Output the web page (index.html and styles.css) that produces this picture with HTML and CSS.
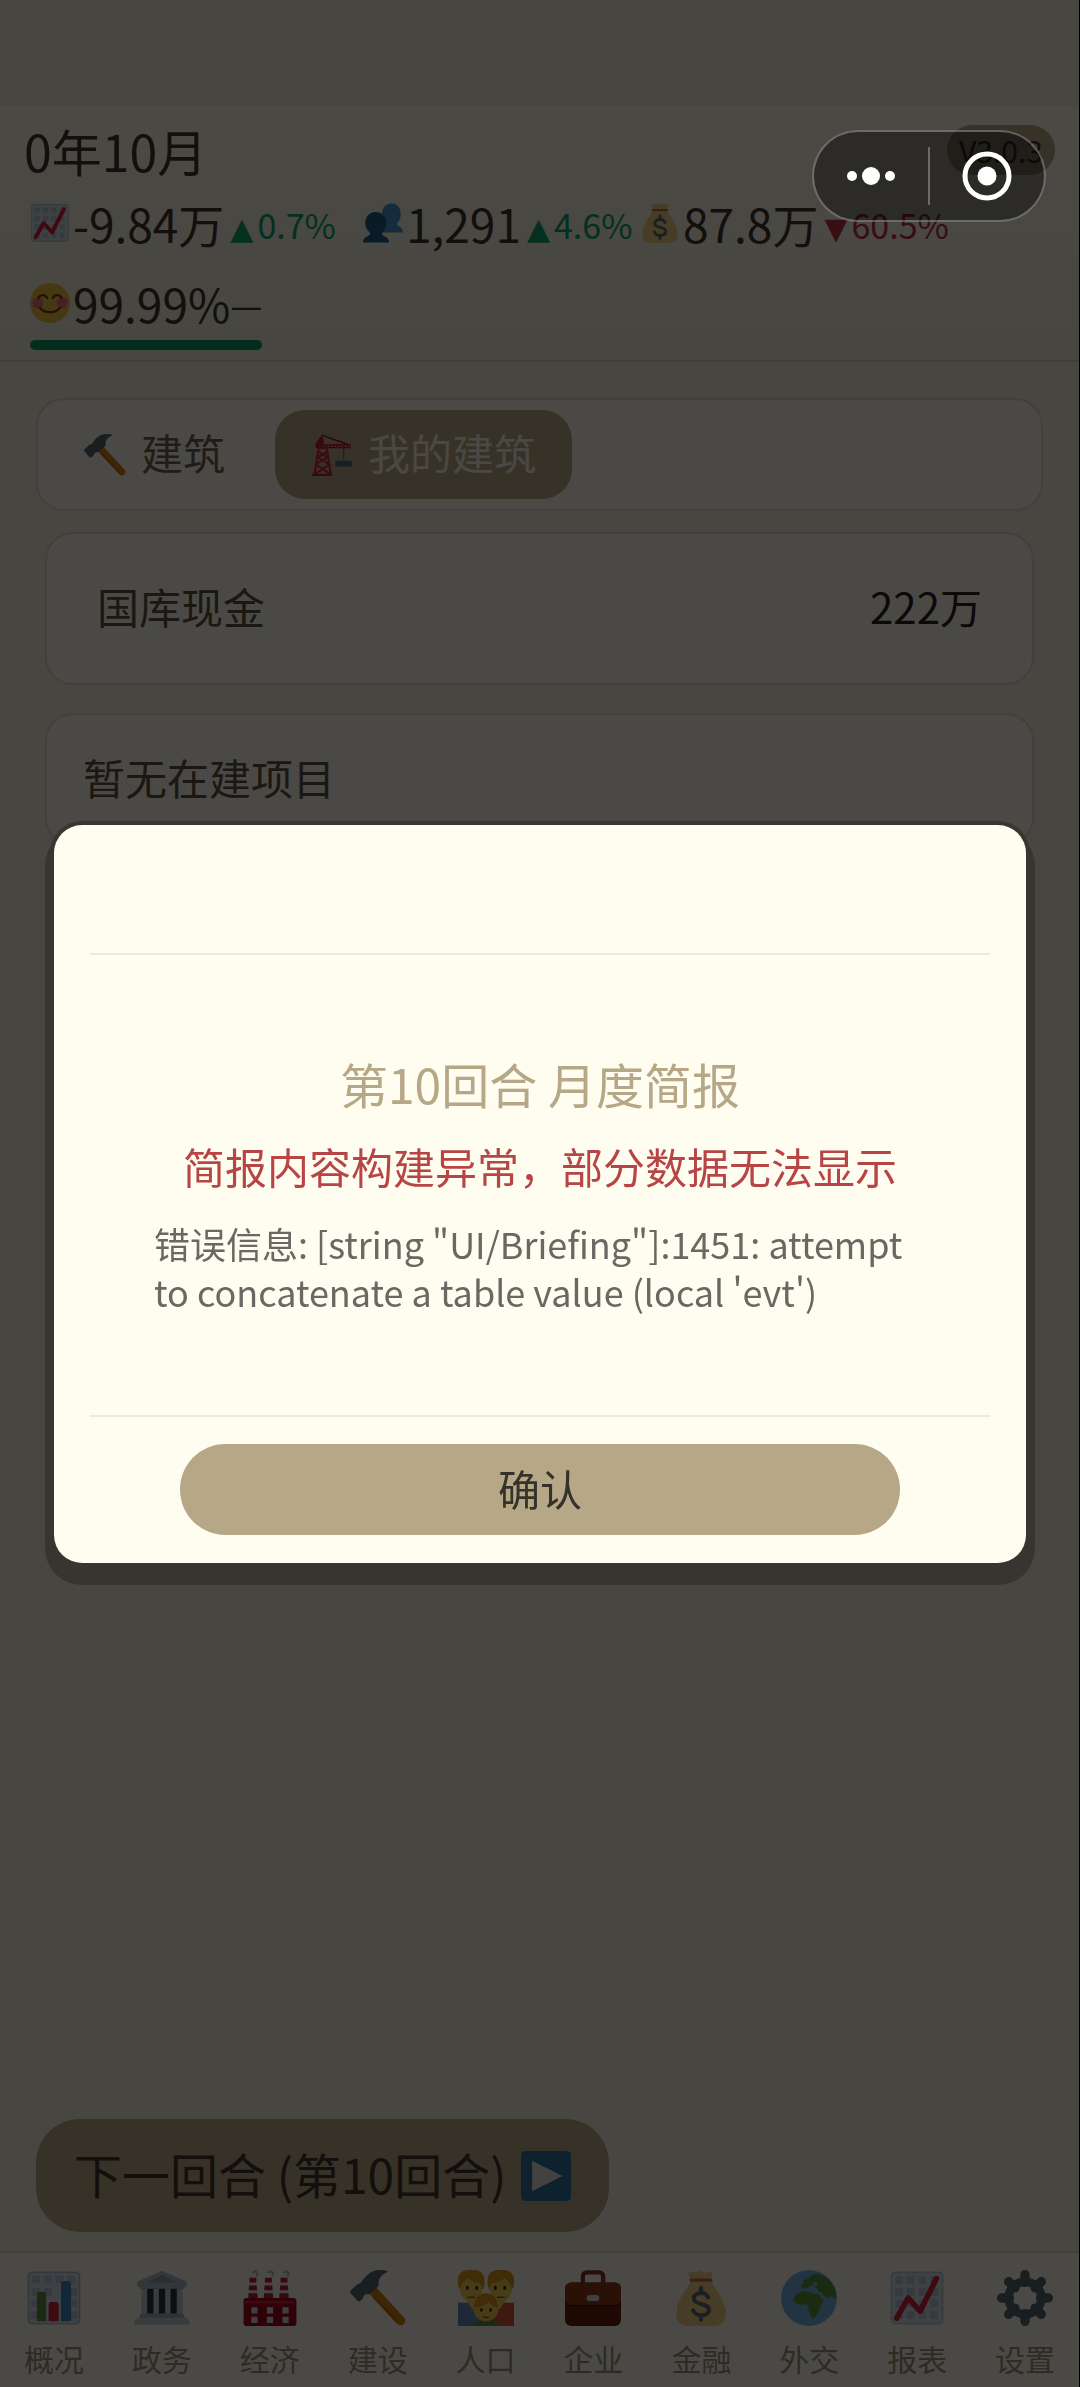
FILE: index.html
```html
<!DOCTYPE html>
<html lang="zh-CN">
<head>
<meta charset="utf-8">
<meta name="viewport" content="width=device-width, initial-scale=1">
<title>我的建筑</title>
<link rel="stylesheet" href="styles.css">
</head>
<body>
<svg class="sprite" aria-hidden="true">
  <symbol id="chart" viewBox="0 0 36 36">
    <rect x="1" y="1" width="34" height="34" rx="3" fill="#b4c2cc"/>
    <rect x="2" y="2" width="32" height="32" rx="2" fill="#d3dde4"/>
    <path fill="#b4c4d0" d="M4 4h5v5H4zM11.500 4h5v5h-5zM19 4h5v5h-5zM26.500 4h5v5h-5zM4 11.500h5v5H4zM11.500 11.500h5v5h-5zM19 11.500h5v5h-5zM26.500 11.500h5v5h-5zM4 19h5v5H4zM11.500 19h5v5h-5zM19 19h5v5h-5zM26.500 19h5v5h-5zM4 26.500h5v5H4zM11.500 26.500h5v5h-5zM19 26.500h5v5h-5zM26.500 26.500h5v5h-5z"/>
    <path d="M5 31l7.300-13L20 26.500 30.500 5.500" fill="none" stroke="#d1213a" stroke-width="3.600" stroke-linecap="round" stroke-linejoin="round"/>
  </symbol>
  <symbol id="bars" viewBox="0 0 36 36">
    <rect x="1" y="1" width="34" height="34" rx="3" fill="#aab8c2"/>
    <rect x="2" y="2" width="32" height="32" rx="2" fill="#d3dde4"/>
    <path fill="#b4c4d0" d="M4 3.500h5v5H4zM11.500 3.500h5v5h-5zM19 3.500h5v5h-5zM26.500 3.500h5v5h-5zM4 11.500h5v5H4zM11.500 11.500h5v5h-5zM29 11.500h4v5h-4zM29 19h4v5h-4zM29 26.500h4v5h-4zM3 19h4v5H3zM3 26.500h4v5H3z"/>
    <path fill="#5c913b" d="M7 33V16a2 2 0 0 1 2-2h2a2 2 0 0 1 2 2v17z"/>
    <path fill="#d1213a" d="M14.500 33V22.500a2 2 0 0 1 2-2h2.500a2 2 0 0 1 2 2V33z"/>
    <path fill="#3b88c3" d="M22.500 33V9a2 2 0 0 1 2-2H27a2 2 0 0 1 2 2v24z"/>
  </symbol>
  <symbol id="bank" viewBox="0 0 36 36">
    <path fill="#66757f" d="M5 11h26v18H5z"/>
    <path fill="#292f33" d="M8 12h20v16H8z"/>
    <path fill="#bcc8d1" d="M5 12h3.500v17H5zM12.500 12H16v17h-3.500zM20 12h3.500v17H20zM27.500 12H31v17h-3.500z"/>
    <path fill="#aab8c2" d="M18 .5L34 7.500V10l-2 2H4l-2-2V7.500z"/>
    <path fill="#8899a6" d="M18 3l10 5H8z"/>
    <path fill="#9aaab4" d="M4.500 28h27l1.500 3H3z"/>
    <path fill="#bcc8d1" d="M3 31h30c1.500 0 3 1.500 3 4H0c0-2.500 1.500-4 3-4z"/>
  </symbol>
  <symbol id="factory" viewBox="0 0 36 36">
    <path fill="#dce4e9" d="M5 6h4l1 13H4zM15 6h4l1 13h-6zM25 6h4l1 13h-6z"/>
    <path fill="#be1931" d="M4.800 5h4.400v3H4.700zM4.500 10h5l.2 3H4.300zM4.200 15h5.600l.2 3H4zM14.800 5h4.400v3h-4.500zM14.500 10h5l.2 3h-5.400zM14.200 15h5.600l.2 3h-6zM24.800 5h4.400v3h-4.500zM24.500 10h5l.2 3h-5.400zM24.200 15h5.600l.2 3h-6z"/>
    <rect x="1" y="18" width="34" height="18" rx="2" fill="#a0041e"/>
    <path fill="#c9263d" d="M2 20h32v1.500H2z"/>
    <path fill="#ccd6dd" d="M6 24h4v4H6zM16 24h4v4h-4zM26 24h4v4h-4zM6 30h4v4H6zM16 30h4v4h-4zM26 30h4v4h-4z"/>
    <path fill="none" stroke="#aab8c2" stroke-width="1.400" d="M7 2a1.500 1.500 0 1 1 2 1.800M17 2a1.500 1.500 0 1 1 2 1.800M27 2a1.500 1.500 0 1 1 2 1.800"/>
  </symbol>
  <symbol id="hammer" viewBox="0 0 36 36">
    <path d="M14 12.500L32.500 32.500" stroke="#d07d0b" stroke-width="6" stroke-linecap="round"/>
    <path d="M15 17l15 16" stroke="#b46a08" stroke-width="1.500" stroke-linecap="round"/>
    <path fill="#56646f" d="M.5 13l4.500-4c1.800-.2 2.200-1 3-2.200C11 2.500 15-.8 22 .2c2 .1 2.500.8 1.500 1.400-4 1.700-5.500 4.900-5 7.900.1 1-5.700 6.400-6.800 6.200-2-.4-3 .2-3.200 2.300L6.500 20c-.8.5-1.400.2-2.300-.8l-3.700-4.200c-.6-.8-.6-1.400 0-2z"/>
  </symbol>
  <symbol id="family" viewBox="0 0 36 36">
    <path fill="#6a86b5" d="M0 21h18v15H0z"/><path fill="#d0553a" d="M18 21h18v15H18z"/>
    <rect x="0" y="0" width="17" height="15" rx="6" fill="#d9941e"/><rect x="19" y="0" width="17" height="15" rx="6" fill="#d9941e"/>
    <ellipse cx="8.500" cy="12.500" rx="7" ry="8" fill="#efca52"/><ellipse cx="27.500" cy="12.500" rx="7" ry="8" fill="#efca52"/>
    <path fill="#d9941e" d="M1 10c2-1 4-4 5-5 3 3 6 3 10 4V4L9 1 2 3zM35 10c-2-1-4-4-5-5-3 3-6 3-10 4V4l7-3 7 2z"/>
    <path fill="#efca52" d="M5 19h8v6H9zM23 19h8l-4 6h-4z"/>
    <circle cx="18" cy="25" r="8" fill="#efca52"/>
    <path fill="#d9941e" d="M10.500 24c0-6 3-9 7.500-9s7.500 3 7.500 9c-2 0-4-1-6-3.500-2 2-5 3.500-9 3.500z"/>
    <path fill="#5c913b" d="M9 36c1-2 3-3.500 6-3.500q3 2 6 0c3 0 5 1.500 6 3.500z"/>
    <path d="M6 11v1M12 11v1M24 11v1M30 11v1M15 25.500v.5M21 25.500v.5" stroke="#662113" stroke-width="1.800" stroke-linecap="round"/>
    <path d="M6 17.500h5M25 17.500h5M16 30q2 1 4 0" stroke="#9b4a26" fill="none"/>
  </symbol>
  <symbol id="briefcase" viewBox="0 0 36 36">
    <path d="M11.500 9V4a2.500 2.500 0 0 1 2.500-2.500h8A2.500 2.500 0 0 1 24.500 4v5" fill="none" stroke="#803315" stroke-width="2.800"/>
    <rect x="0" y="8" width="36" height="28" rx="4" fill="#662113"/>
    <path fill="#8a3a1a" d="M0 21v-9a4 4 0 0 1 4-4h28a4 4 0 0 1 4 4v9c-1 1.500-2 2-4 2H4c-2 0-3-.5-4-2z"/>
    <path d="M0 21c1 1.500 2 2 4 2h28c2 0 3-.5 4-2" fill="none" stroke="#451208"/>
    <rect x="14" y="16" width="8" height="4" rx="1.800" fill="#ccd6dd"/>
  </symbol>
  <symbol id="bag" viewBox="0 0 36 36">
    <path fill="#eecb80" d="M9.500 1q1.500 1.500 3 0 1.500 1.500 3 0 1.500-1 3 0 2 1.500 3.500 0 2 1 3.500 0L24 7l2 3c3 4 6 9 8 16 1 5-2 10-8 10H10C3 36 1 31 2.500 26c-.5-5 3-9 7.500-16l2-3z"/>
    <path d="M11.500 6.500h13" stroke="#bf6952" stroke-width="2" stroke-linecap="round"/>
    <path d="M22.500 17.500c-1-2-3-3-5-2.700-3 .3-4.500 2-4 4 .7 4 9.500 2.500 9.700 6.700.1 4.500-8.500 5-10.200.5M18 11.500v3M18 29v3" fill="none" stroke="#5b6872" stroke-width="2.600" stroke-linecap="round"/>
  </symbol>
  <symbol id="globe" viewBox="0 0 36 36">
    <circle cx="18" cy="18" r="18" fill="#74b0de"/>
    <path fill="#5c913b" d="M23 2c5 1 11 6 12.500 13 0 2-.5 3-1 3.500-1-1-2-2-3-1.500-1.500 1.500-3 1-4-.5l-1-2c-1.500-.5-2.500-.5-3-2-1-1.500-2-2.500-4-2.500-2 1-3 2-4.500 2-2-.5-3-1.500-2-2.500 1.500-.8 2-1.500 1-2.200 0-1.500 3-1 4-2 .5-1.500 2-2 5-3.300z"/>
    <path fill="#5c913b" d="M11 15c3-2 7-1.500 9 0 2 .3 4 0 5 1.500.5 2 1.500 2.500 2.500 3-.2 2.500-3 4-3 6.500-.5 2.500-2 4-4 5.500-1.500-1.500-2.500-4-3-6.500 0-2-.5-3-2-3.200-3 .7-6 .5-7.500-2 .2-2 1-4 3-4.800z"/>
    <circle cx="22" cy="9" r="1.500" fill="#74b0de"/>
  </symbol>
  <symbol id="gear" viewBox="0 0 36 36">
    <path d="M18 3v5M18 28v5M3 18h5M28 18h5M7.500 7.500l4 4M24.500 24.500l4 4M28.500 7.500l-4 4M11.500 24.500l-4 4" stroke="#56646f" stroke-width="6" stroke-linecap="round"/>
    <circle cx="18" cy="18" r="10.500" fill="none" stroke="#56646f" stroke-width="5.500"/>
  </symbol>
  <symbol id="busts" viewBox="0 0 36 36">
    <path fill="#4694cf" d="M17 11c0-6 3-10.500 8.500-10.500S34 5 34 10c0 4-1.500 6.500-3.500 8.500 0 3 5.500 2.500 5.500 8H16z"/>
    <path fill="#245a85" d="M2 18c0-6 4-10 9.500-10S21 12 21 18c0 4-1.500 7-4 9-.5 3.500 6.500 2.500 6.500 8.500H0c0-6 6.500-5 6.500-8.500C4 25 2 22 2 18z"/>
  </symbol>
  <symbol id="smile" viewBox="0 0 36 36">
    <circle cx="18" cy="18" r="18" fill="#edbc45"/><circle cx="7" cy="18" r="5" fill="#e86f84"/><circle cx="29" cy="18" r="5" fill="#e86f84"/>
    <path d="M7.500 13.500c2-3.500 6-3.500 8 0M20.500 13.500c2-3.500 6-3.500 8 0M9 22.500c4.500 5 13.500 5 18 0" fill="none" stroke="#664500" stroke-width="2" stroke-linecap="round"/>
  </symbol>
  <symbol id="crane" viewBox="0 0 36 36">
    <path d="M9 1L32 9M11 10h23" stroke="#a0041e" stroke-width="1.200"/>
    <path d="M12 10.500h22" stroke="#be1931" stroke-width="3.500"/><path d="M14 10.500h19" stroke="#eac0c0" stroke-width="1" stroke-dasharray="1.500 1.500"/>
    <path d="M7 9L3 35M13 9l4 26M6 15l8 5-10 6 12 8M14 15l-8 5 10 6-12 8M6.500 12h7" fill="none" stroke="#c9263d" stroke-width="1.800"/>
    <path fill="#be1931" d="M4 8l5-7 2 4v7H4zM1 34h17v2H1z"/>
    <path d="M28 12v10" stroke="#8b5e3c"/><path fill="#56646f" d="M21 23h14v5H21z"/><path d="M21 23h14" stroke="#7b8b97"/>
  </symbol>
  <symbol id="play" viewBox="0 0 36 36">
    <rect width="36" height="36" rx="3" fill="#2f709f"/><path fill="#dfdcd6" d="M8 7l22 11L8 29z"/>
  </symbol>
</svg>

<div class="app">
  <header class="top">
    <div class="top-row">
      <h1 class="date">0年10月</h1>
      <span class="version">V3.0.3</span>
    </div>
    <ul class="stats">
      <li class="stat"><svg class="stat-icon"><use href="#chart"/></svg>-9.84万<span class="delta up"><i>▲</i>0.7%</span></li>
      <li class="stat"><svg class="stat-icon"><use href="#busts"/></svg>1,291<span class="delta up"><i>▲</i>4.6%</span></li>
      <li class="stat"><svg class="stat-icon"><use href="#bag"/></svg>87.8万<span class="delta down"><i>▼</i>60.5%</span></li>
      <li class="stat mood"><svg class="stat-icon"><use href="#smile"/></svg>99.99%<span class="delta flat">—</span></li>
    </ul>
  </header>

  <main class="content">
    <div class="tabs">
      <button class="tab" type="button"><svg class="tab-icon"><use href="#hammer"/></svg><span>建筑</span></button>
      <button class="tab active" type="button"><svg class="tab-icon"><use href="#crane"/></svg><span>我的建筑</span></button>
    </div>
    <section class="card cash"><span>国库现金</span><strong>222万</strong></section>
    <section class="card queue">暂无在建项目</section>
    <section class="card list"></section>
  </main>

  <div class="action">
    <button class="next" type="button"><span>下一回合 (第10回合)</span><svg class="next-icon"><use href="#play"/></svg></button>
  </div>

  <nav class="nav">
    <a href="#"><svg><use href="#bars"/></svg>概况</a>
    <a href="#"><svg><use href="#bank"/></svg>政务</a>
    <a href="#"><svg><use href="#factory"/></svg>经济</a>
    <a href="#"><svg><use href="#hammer"/></svg>建设</a>
    <a href="#"><svg><use href="#family"/></svg>人口</a>
    <a href="#"><svg><use href="#briefcase"/></svg>企业</a>
    <a href="#"><svg><use href="#bag"/></svg>金融</a>
    <a href="#"><svg><use href="#globe"/></svg>外交</a>
    <a href="#"><svg><use href="#chart"/></svg>报表</a>
    <a href="#"><svg><use href="#gear"/></svg>设置</a>
  </nav>
</div>

<div class="overlay">
  <div class="modal" role="dialog" aria-labelledby="brief-title">
    <div class="modal-head"></div>
    <div class="modal-body">
      <h2 id="brief-title">第10回合 月度简报</h2>
      <p class="alert">简报内容构建异常，部分数据无法显示</p>
      <p class="detail">错误信息: [string "UI/Briefing"]:1451: attempt to concatenate a table value (local 'evt')</p>
    </div>
    <div class="modal-foot"><button class="confirm" type="button">确认</button></div>
  </div>
</div>

<div class="capsule">
  <button type="button" aria-label="更多"><svg width="52" height="52" viewBox="0 0 52 52" fill="#fff"><circle cx="7" cy="26" r="5"/><circle cx="26" cy="26" r="9"/><circle cx="45" cy="26" r="5"/></svg></button>
  <button type="button" aria-label="关闭"><svg width="52" height="52" viewBox="0 0 52 52"><circle cx="26" cy="26" r="22" fill="none" stroke="#fff" stroke-width="5"/><circle cx="26" cy="26" r="9.500" fill="#fff"/></svg></button>
</div>
</body>
</html>
```
FILE: styles.css
```css
* { box-sizing: border-box; margin: 0; padding: 0; }

body {
  background: #eee9d6;
  color: #3c352a;
  font-family: "Noto Sans CJK SC", "Noto Sans", sans-serif;
  font-size: 42px;
}

button { border: 0; background: none; font: inherit; color: inherit; }
svg { flex: none; }
.sprite { position: absolute; width: 0; height: 0; }

.app {
  display: flex;
  flex-direction: column;
  min-height: 100vh;
  padding-top: 106px;
  border-right: 1px solid #000;
}

/* header */
.top {
  padding: 14px 24px 10px 24px;
  background: linear-gradient(#fbf5e4, #f1ebd9);
  border-bottom: 2px solid #d8cfba;
}
.top-row { display: flex; align-items: center; justify-content: space-between; }
.date { font-size: 50px; font-weight: 400; line-height: 60px; }
.version {
  padding: 0 12px;
  border-radius: 25px;
  background: #b6a787;
  font-size: 30px;
  line-height: 50px;
}
.stats {
  display: grid;
  grid-template-columns: 333px 277px auto;
  gap: 6px 0;
  padding: 6px 0 0 6px;
  list-style: none;
}
.stat {
  display: flex;
  align-items: center;
  justify-self: start;
  font-size: 46px;
  line-height: 74px;
  white-space: nowrap;
}
.stat-icon { width: 40px; height: 40px; margin-right: 3px; }
.delta { margin-left: 6px; padding-top: 4px; font-size: 34px; line-height: 60px; }
.delta i {
  margin-right: 4px;
  font-family: "DejaVu Sans", sans-serif;
  font-size: 30px;
  font-style: normal;
  line-height: 30px;
}
.up { color: #0fa06a; }
.down { color: #b8323c; }
.flat { margin-left: 0; padding-top: 0; font-size: 36px; }
.mood { flex-wrap: wrap; }
.mood::after {
  content: "";
  flex-basis: 100%;
  height: 10px;
  border-radius: 5px;
  background: #0a9664;
}

/* content */
.content { display: flex; flex: 1; flex-direction: column; padding: 36px; }
.tabs, .card { background: #fbf5e7; border: 2px solid #dcd5c3; }
.tabs { display: flex; gap: 14px; padding: 10px; border-radius: 28px; }
.tab {
  display: flex;
  align-items: center;
  gap: 15px;
  padding: 0 36px;
  border-radius: 30px;
  color: #6b6252;
}
.tab span { padding-bottom: 6px; line-height: 83px; }
.tab.active { background: #b6a787; color: #f6f0e2; }
.tab-icon { width: 42px; height: 42px; }
.card { margin: 0 9px 28px; border-radius: 28px; }
.cash {
  display: flex;
  align-items: center;
  justify-content: space-between;
  margin-top: 21px;
  padding: 0 50px 6px;
  line-height: 143px;
  color: #5c5344;
}
.cash strong { font-weight: 400; color: #2a241b; }
.queue { padding: 0 36px 6px; line-height: 123px; color: #5c5344; }
.list { min-height: 640px; }

/* bottom */
.action { padding: 0 36px 19px; }
.next {
  display: flex;
  align-items: center;
  gap: 15px;
  padding: 0 38px;
  border-radius: 44px;
  background: #b6a787;
  font-size: 48px;
}
.next span { padding-bottom: 4px; line-height: 109px; }
.next-icon { width: 50px; height: 50px; }
.nav {
  display: flex;
  padding: 17px 0 9px;
  border-top: 2px solid #dcd5c3;
  background: #fbf5e7;
}
.nav a {
  display: flex;
  flex: 1;
  flex-direction: column;
  align-items: center;
  gap: 12px;
  color: #9c907a;
  font-size: 30px;
  line-height: 40px;
  text-decoration: none;
}
.nav svg { width: 56px; height: 56px; }

/* monthly briefing dialog */
.overlay {
  position: fixed;
  inset: 0;
  display: flex;
  align-items: center;
  justify-content: center;
  background: rgba(0, 0, 0, .7);
}
.modal {
  width: 90%;
  border-radius: 28px;
  background: #fffdf0;
  box-shadow: 0 0 0 4px #383630, 0 13px 0 9px #373530;
}
.modal-head { height: 128px; }
.modal-body {
  margin: 0 36px;
  padding: 98px 64px 100px;
  border: solid #f1e9dc;
  border-width: 2px 0;
  display: flex;
  flex-direction: column;
  gap: 23px;
}
.modal h2, .alert { font-weight: 400; line-height: 60px; text-align: center; }
.modal h2 { font-size: 48px; color: #b6a787; }
.alert { color: #b84545; }
.detail { font-size: 36px; line-height: 48px; color: #6b6762; }
.modal-foot { display: flex; padding: 27px 126px 28px; }
.confirm { flex: 1; padding-bottom: 4px; border-radius: 46px; background: #b6a787; color: #35322c; line-height: 87px; }

/* mini-program capsule */
.capsule {
  position: absolute;
  top: 130px;
  right: 34px;
  display: flex;
  width: 234px;
  height: 92px;
  padding: 15px 0;
  border: 2px solid rgba(255, 255, 255, .3);
  border-radius: 46px;
  background: rgba(0, 0, 0, .4);
}
.capsule button { display: flex; flex: 1; align-items: center; justify-content: center; }
.capsule button + button { border-left: 2px solid rgba(255, 255, 255, .3); }
```
